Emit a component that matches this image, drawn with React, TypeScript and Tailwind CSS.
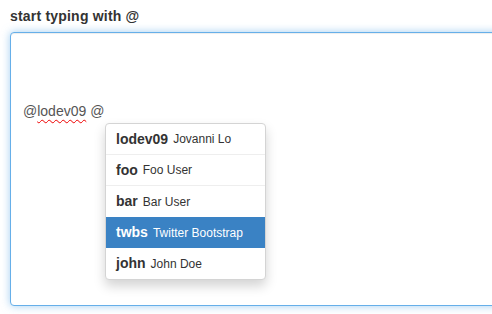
import React from "react";

const items = [
  { u: "lodev09", n: "Jovanni Lo" },
  { u: "foo", n: "Foo User" },
  { u: "bar", n: "Bar User" },
  { u: "twbs", n: "Twitter Bootstrap", active: true },
  { u: "john", n: "John Doe" },
];

export default function App() {
  return (
    <div
      className="w-[492px] h-[314px] overflow-hidden bg-white pl-[10px] pt-[6px] text-[#333]"
      style={{ fontFamily: '"Liberation Sans", Arial, sans-serif' }}
    >
      <div className="text-[14px] font-bold leading-[20px] mb-[6px] tracking-[0.2px]">start typing with @</div>
      <div className="relative w-[520px] h-[274px] rounded-[4px] border border-[#66afe9] shadow-[inset_0_1px_1px_rgba(0,0,0,0.075),0_0_8px_rgba(102,175,233,0.6)] bg-white">
        <div className="pl-[12px] pt-[68px] text-[14px] leading-[20px] text-[#555]">
          @<span className="underline decoration-wavy decoration-[#e00] decoration-[1px] underline-offset-[3px]">lodev09</span> @
        </div>
        <div className="absolute left-[94px] top-[90px] w-[161px] rounded-[4px] border border-[#d4d4d4] bg-white shadow-[0_6px_12px_rgba(0,0,0,0.175)] overflow-hidden">
          {items.map((it, i) => (
            <div
              key={it.u}
              className={
                "h-[31px] flex items-center pl-[10px] whitespace-nowrap " +
                (i < items.length - 1 && !it.active && !items[i + 1]?.active ? "border-b border-[#eee] " : "") +
                (it.active ? "bg-[#3a82c4] text-white" : "text-[#333]")
              }
            >
              <span className="text-[14px] font-bold">{it.u}</span>
              <span className="text-[12px] ml-[5px]">{it.n}</span>
            </div>
          ))}
        </div>
      </div>
    </div>
  );
}
